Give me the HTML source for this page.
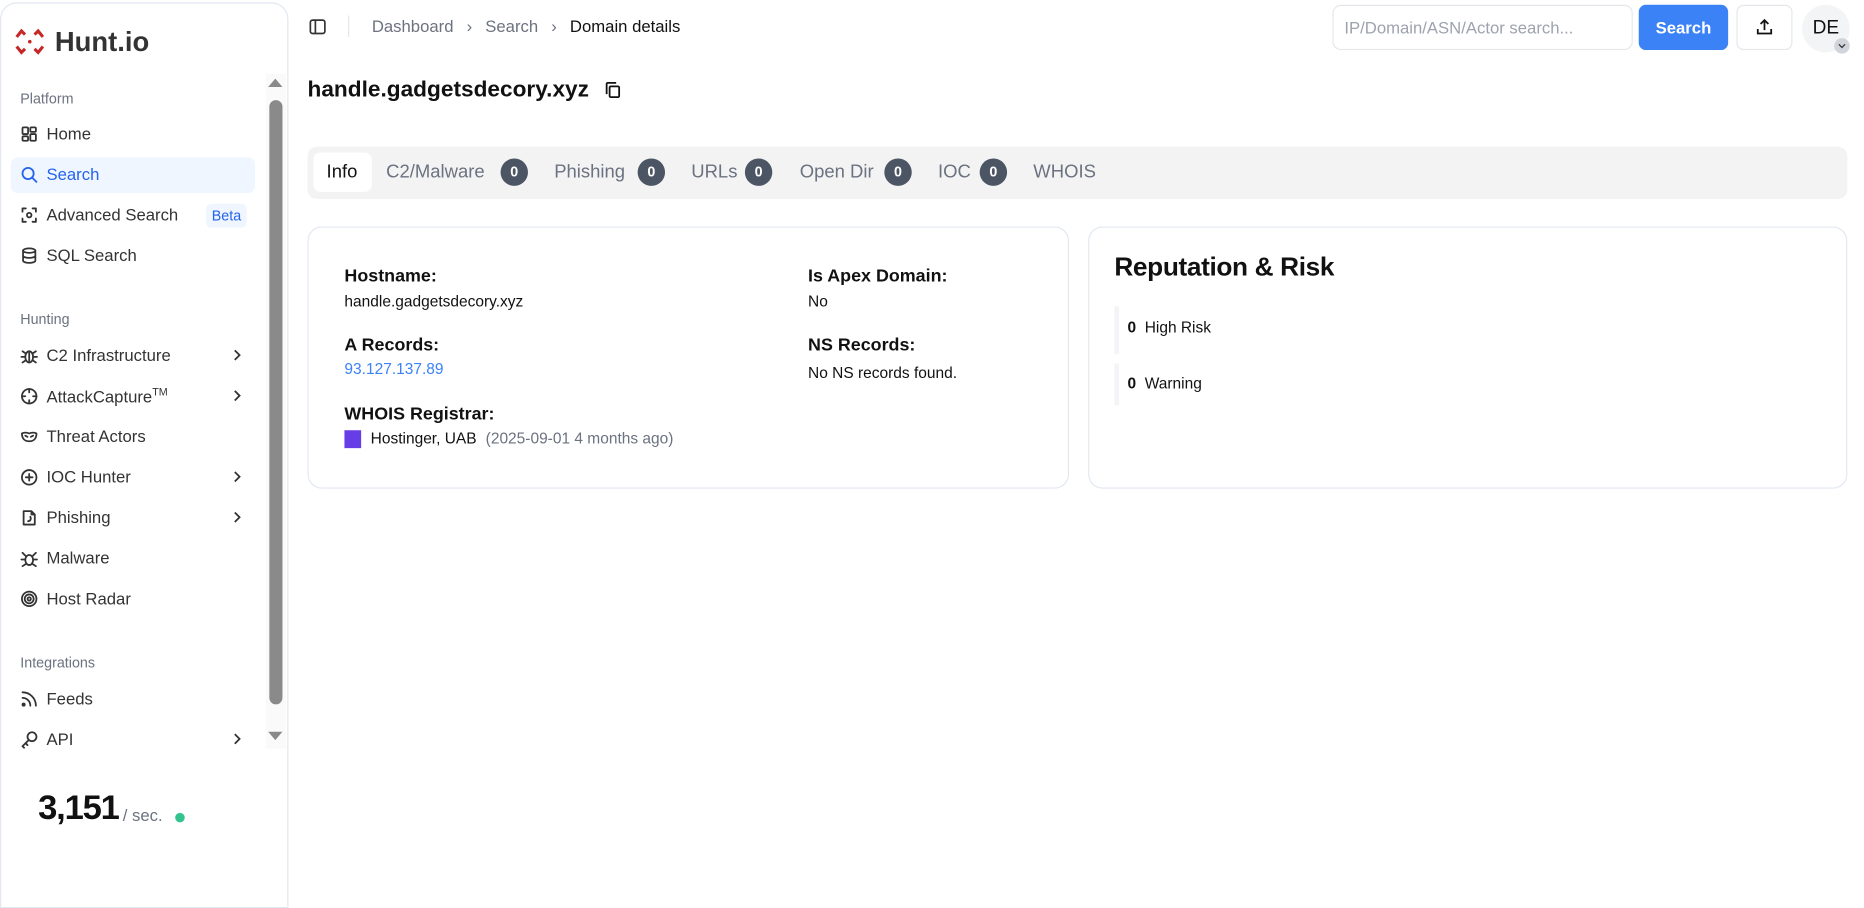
<!DOCTYPE html>
<html><head><meta charset="utf-8"><style>
*{box-sizing:border-box;margin:0;padding:0}
html,body{width:1864px;height:844px;overflow:hidden;background:#fff;font-family:"Liberation Sans",sans-serif;color:#111}
#w{position:absolute;left:0;top:0;width:1564px;height:708px;transform:scale(1.19182);transform-origin:0 0}
.a{position:absolute;white-space:nowrap}
.side{position:absolute;left:0;top:2px;width:242px;height:760px;border:1px solid #e2e8f0;border-radius:14px 14px 0 0;background:#fff}
.lbl{position:absolute;left:17px;font-size:12px;color:#6b7280}
.it{position:absolute;left:17px;font-size:14px;color:#333;display:flex;align-items:center;gap:7px;height:20px}
.it svg{width:15px;height:15px;fill:none;stroke:#333;stroke-width:1.6;stroke-linecap:round;stroke-linejoin:round}
.chev{position:absolute;left:194px;width:10px;height:10px}
.tab{position:absolute;top:136px;font-size:15.5px;color:#6b7280}
.bd{position:absolute;top:133px;width:23px;height:23px;border-radius:50%;background:#4b5563;color:#fff;font-size:12px;font-weight:bold;text-align:center;line-height:23px}
.card{position:absolute;top:190px;height:220px;border:1px solid #e2e8f0;border-radius:12px;background:#fff}
.k{position:absolute;font-size:15px;font-weight:bold;color:#111}
.v{position:absolute;font-size:13px;color:#111}
</style></head><body><div id="w">
<div class="side"></div>
<svg class="a" style="left:12px;top:22px" width="26" height="26" viewBox="0 0 26 26" fill="none" stroke="#c62828" stroke-width="2.6"><path d="M2 9 L6 4 L9 7 M17 7 L20 4 L24 9 M2 17 L6 22 L9 19 M17 19 L20 22 L24 17"/><circle cx="13" cy="13" r="1.5" fill="#c62828" stroke="none"/></svg>
<div class="a" style="left:46px;top:22px;font-size:23px;font-weight:bold;color:#333">Hunt.io</div>
<div class="lbl" style="top:76px">Platform</div>
<div class="a" style="left:9px;top:132px;width:205px;height:30px;background:#eff6ff;border-radius:6px"></div>
<div class="it" style="top:102px"><svg viewBox="0 0 16 16"><rect x="2" y="2" width="5" height="6" rx="1"/><rect x="9" y="2" width="5" height="4" rx="1"/><rect x="9" y="8" width="5" height="6" rx="1"/><rect x="2" y="10" width="5" height="4" rx="1"/></svg><span>Home</span></div>
<div class="it" style="top:136px;color:#2563eb"><svg viewBox="0 0 16 16" style="stroke:#2563eb"><circle cx="7" cy="7" r="5"/><path d="M11 11l3.5 3.5"/></svg><span>Search</span></div>
<div class="it" style="top:170px"><svg viewBox="0 0 16 16"><path d="M2 5V2h3M11 2h3v3M14 11v3h-3M5 14H2v-3"/><circle cx="8" cy="8" r="2"/></svg><span>Advanced Search</span></div>
<div class="a" style="left:173px;top:171px;width:34px;height:20px;background:#eff6ff;border-radius:4px;color:#2563eb;font-size:12px;text-align:center;line-height:20px">Beta</div>
<div class="it" style="top:204px"><svg viewBox="0 0 16 16"><ellipse cx="8" cy="3.5" rx="5.5" ry="2"/><path d="M2.5 3.5v9c0 1.1 2.5 2 5.5 2s5.5-.9 5.5-2v-9M2.5 8c0 1.1 2.5 2 5.5 2s5.5-.9 5.5-2"/></svg><span>SQL Search</span></div>
<div class="lbl" style="top:261px">Hunting</div>
<div class="it" style="top:288px"><svg viewBox="0 0 16 16"><ellipse cx="8" cy="9" rx="3.5" ry="5"/><path d="M1 9h3.5M11.5 9H15M2 4l3 2M14 4l-3 2M2 14l3-2M14 14l-3-2M8 4v10"/></svg><span>C2 Infrastructure</span></div>
<div class="it" style="top:322px"><svg viewBox="0 0 16 16"><circle cx="8" cy="8" r="6.5"/><path d="M8 1.5v3M8 11.5v3M1.5 8h3M11.5 8h3"/></svg><span>AttackCapture<sup style="font-size:9px">TM</sup></span></div>
<div class="it" style="top:356px"><svg viewBox="0 0 16 16"><path d="M1.5 5c2-1 4-1 6.5 0 2.5-1 4.5-1 6.5 0 0 4-2 7-6.5 7S1.5 9 1.5 5z"/><path d="M4.5 7l2 1M11.5 7l-2 1"/></svg><span>Threat Actors</span></div>
<div class="it" style="top:390px"><svg viewBox="0 0 16 16"><circle cx="8" cy="8" r="6.5"/><path d="M8 5v6M5 8h6"/></svg><span>IOC Hunter</span></div>
<div class="it" style="top:424px"><svg viewBox="0 0 16 16"><path d="M3 2h7l3 3v9H3zM10 2v3h3M7 11c2 0 3-2 2-4"/></svg><span>Phishing</span></div>
<div class="it" style="top:458px"><svg viewBox="0 0 16 16"><ellipse cx="8" cy="9.5" rx="3.5" ry="4.5"/><path d="M1 9h3.5M11.5 9H15M2 3l3 3M14 3l-3 3M2 15l3-2M14 15l-3-2"/></svg><span>Malware</span></div>
<div class="it" style="top:492px"><svg viewBox="0 0 16 16"><circle cx="8" cy="8" r="6.5"/><circle cx="8" cy="8" r="4"/><circle cx="8" cy="8" r="1.5"/></svg><span>Host Radar</span></div>
<div class="lbl" style="top:549px">Integrations</div>
<div class="it" style="top:576px"><svg viewBox="0 0 16 16"><path d="M2 7a7 7 0 0 1 7 7M2 2a12 12 0 0 1 12 12"/><circle cx="3" cy="13" r="1" fill="#333"/></svg><span>Feeds</span></div>
<div class="it" style="top:610px"><svg viewBox="0 0 16 16"><circle cx="10.5" cy="5.5" r="4"/><path d="M7.5 8.5L2 14l1.5 1.5M5 11.5l1.5 1.5"/></svg><span>API</span></div>
<svg class="chev" style="top:293px" viewBox="0 0 10 10" fill="none" stroke="#333" stroke-width="1.5"><path d="M3 1l4 4-4 4"/></svg>
<svg class="chev" style="top:327px" viewBox="0 0 10 10" fill="none" stroke="#333" stroke-width="1.5"><path d="M3 1l4 4-4 4"/></svg>
<svg class="chev" style="top:395px" viewBox="0 0 10 10" fill="none" stroke="#333" stroke-width="1.5"><path d="M3 1l4 4-4 4"/></svg>
<svg class="chev" style="top:429px" viewBox="0 0 10 10" fill="none" stroke="#333" stroke-width="1.5"><path d="M3 1l4 4-4 4"/></svg>
<svg class="chev" style="top:615px" viewBox="0 0 10 10" fill="none" stroke="#333" stroke-width="1.5"><path d="M3 1l4 4-4 4"/></svg>
<div class="a" style="left:223px;top:62px;width:17px;height:566px;background:#fafafa"></div>
<div class="a" style="left:225px;top:66px;width:0;height:0;border-left:6px solid transparent;border-right:6px solid transparent;border-bottom:7px solid #8a8a8a"></div>
<div class="a" style="left:226px;top:84px;width:11px;height:507px;background:#8a8a8a;border-radius:6px"></div>
<div class="a" style="left:225px;top:614px;width:0;height:0;border-left:6px solid transparent;border-right:6px solid transparent;border-top:7px solid #8a8a8a"></div>
<div class="a" style="left:32px;top:662px;font-size:29px;font-weight:bold;color:#111;letter-spacing:-1px">3,151</div>
<div class="a" style="left:103px;top:676px;font-size:14px;color:#6b7280">/ sec.</div>
<div class="a" style="left:147px;top:682px;width:8px;height:8px;border-radius:50%;background:#34c38f"></div>

<svg class="a" style="left:259px;top:15px" width="15" height="15" viewBox="0 0 16 16" fill="none" stroke="#333" stroke-width="1.5"><rect x="1.5" y="2" width="13" height="12" rx="2"/><path d="M6 2v12"/></svg>
<div class="a" style="left:292px;top:13px;width:1px;height:18px;background:#e5e7eb"></div>
<div class="a" style="left:312px;top:14px;font-size:14px;color:#6b7280">Dashboard<span style="margin:0 11px">›</span>Search<span style="margin:0 11px">›</span><span style="color:#111">Domain details</span></div>
<div class="a" style="left:1118px;top:4px;width:252px;height:38px;border:1px solid #e5e7eb;border-radius:7px;padding:0 9px;line-height:36px;font-size:14px;color:#9ca3af">IP/Domain/ASN/Actor search...</div>
<div class="a" style="left:1375px;top:4px;width:75px;height:38px;background:#3b82f6;border-radius:6px;color:#fff;font-size:14px;font-weight:bold;text-align:center;line-height:38px">Search</div>
<div class="a" style="left:1457px;top:4px;width:47px;height:38px;border:1px solid #e5e7eb;border-radius:6px"></div>
<svg class="a" style="left:1473px;top:15px" width="15" height="15" viewBox="0 0 16 16" fill="none" stroke="#111" stroke-width="1.6"><path d="M8 11V2M4.5 5.5L8 2l3.5 3.5M2 10v4h12v-4"/></svg>
<div class="a" style="left:1512px;top:4px;width:40px;height:40px;border-radius:50%;background:#f3f4f6;text-align:center;line-height:40px;font-size:16px;color:#111">DE</div>
<div class="a" style="left:1539px;top:32px;width:13px;height:13px;border-radius:50%;background:#d1d5db"></div>
<svg class="a" style="left:1542px;top:35px" width="7" height="7" viewBox="0 0 8 8" fill="none" stroke="#333" stroke-width="1.2"><path d="M1 2.5l3 3 3-3"/></svg>

<div class="a" style="left:258px;top:65px;font-size:19px;font-weight:bold;color:#111">handle.gadgetsdecory.xyz</div>
<svg class="a" style="left:507px;top:68px" width="14" height="15" viewBox="0 0 14 15" fill="none" stroke="#111" stroke-width="1.5"><rect x="4.5" y="4.5" width="8" height="9" rx="1"/><path d="M2 11V2.5a1 1 0 0 1 1-1h7"/></svg>

<div class="a" style="left:258px;top:123px;width:1292px;height:44px;background:#f3f3f3;border-radius:8px"></div>
<div class="a" style="left:263px;top:128px;width:49px;height:33px;background:#fff;border-radius:6px"></div>
<div class="tab" style="left:274px;color:#111">Info</div>
<div class="tab" style="left:324px">C2/Malware</div><div class="bd" style="left:420px">0</div>
<div class="tab" style="left:465px">Phishing</div><div class="bd" style="left:535px">0</div>
<div class="tab" style="left:580px">URLs</div><div class="bd" style="left:625px">0</div>
<div class="tab" style="left:671px">Open Dir</div><div class="bd" style="left:742px">0</div>
<div class="tab" style="left:787px">IOC</div><div class="bd" style="left:822px">0</div>
<div class="tab" style="left:867px">WHOIS</div>

<div class="card" style="left:258px;width:639px"></div>
<div class="k" style="left:289px;top:223px">Hostname:</div>
<div class="v" style="left:289px;top:245px">handle.gadgetsdecory.xyz</div>
<div class="k" style="left:289px;top:281px">A Records:</div>
<div class="v" style="left:289px;top:302px;color:#3b82f6">93.127.137.89</div>
<div class="k" style="left:289px;top:339px">WHOIS Registrar:</div>
<div class="a" style="left:289px;top:361px;width:14px;height:15px;background:#673de6"></div>
<div class="v" style="left:311px;top:360px">Hostinger, UAB <span style="color:#6b7280;margin-left:4px">(2025-09-01 4 months ago)</span></div>
<div class="k" style="left:678px;top:223px">Is Apex Domain:</div>
<div class="v" style="left:678px;top:245px">No</div>
<div class="k" style="left:678px;top:281px">NS Records:</div>
<div class="v" style="left:678px;top:305px">No NS records found.</div>

<div class="card" style="left:913px;width:637px"></div>
<div class="a" style="left:935px;top:211px;font-size:22px;font-weight:bold;color:#111;letter-spacing:-.3px">Reputation &amp; Risk</div>
<div class="a" style="left:935px;top:257px;width:4px;height:40px;background:#f3f4f6"></div>
<div class="v" style="left:946px;top:267px"><b>0</b>&nbsp; High Risk</div>
<div class="a" style="left:935px;top:305px;width:4px;height:35px;background:#f3f4f6"></div>
<div class="v" style="left:946px;top:314px"><b>0</b>&nbsp; Warning</div>
</div></body></html>
